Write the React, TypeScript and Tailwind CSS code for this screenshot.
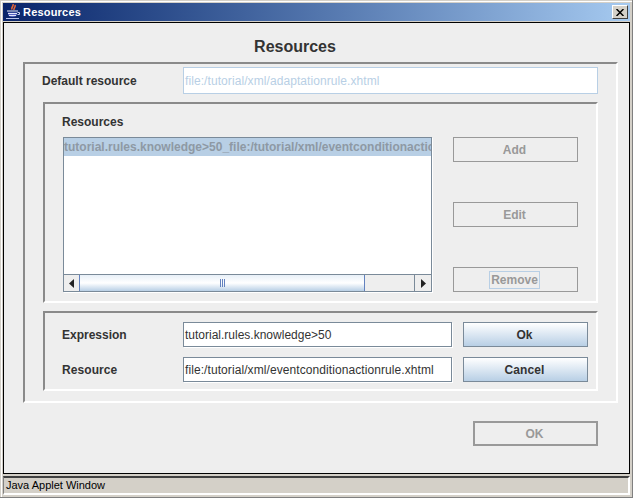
import React from "react";

const font = "font-['Liberation_Sans',Arial,sans-serif]";

const JavaIcon = () => (
  <svg width="16" height="16" viewBox="0 0 16 16" className="shrink-0">
    <path d="M8 0C9 2 6 3 7 5.500M10 1C11 3 8.500 4 9 6" stroke="#e8683a" strokeWidth="1.500" fill="none" />
    <path d="M2 7h11" stroke="#e6eafa" strokeWidth="1" />
    <path d="M3 8.500h9v1.500c0 2-2 3-4.500 3S3 12 3 10z" fill="#5a66c4" />
    <path d="M3 9.500h9M4 11.500h7" stroke="#dfe4f8" strokeWidth="1" />
    <path d="M12.500 8.500h2v2h-2" stroke="#c9d2ee" strokeWidth="1" fill="none" />
    <path d="M1 14.500h13" stroke="#b9c3ea" strokeWidth="1" />
  </svg>
);

const DisabledButton = ({ label, focused }: { label: string; focused?: boolean }) => (
  <div className="w-[125px] h-[25px] border border-[#999999] flex items-center justify-center pr-[2px]">
    <span className={`text-[12px] font-bold text-[#999999] leading-[16px] px-[1px] ${focused ? "outline outline-1 outline-[#b8cfe5]" : ""}`}>
      {label}
    </span>
  </div>
);

const ActiveButton = ({ label }: { label: string }) => (
  <div className="w-[125px] h-[25px] border border-[#7a8a99] flex items-center justify-center pr-[2px] bg-gradient-to-b from-[#ffffff] to-[#b8cfe5] text-[12px] font-bold text-[#333333]">
    {label}
  </div>
);

// etched titled panel: dark top and left, white bottom and right
const Etched = ({ className, children }: { className: string; children: React.ReactNode }) => (
  <div className={`border-t-2 border-l-2 border-t-[#8a8a8a] border-l-[#8a8a8a] border-b-2 border-r-2 border-b-white border-r-white ${className}`}>
    {children}
  </div>
);

const FormRow = ({ label, value, button, className }: { label: string; value: string; button: string; className?: string }) => (
  <div className={`flex items-center h-[25px] ${className ?? ""}`}>
    <div className="w-[121px] text-[12px] font-bold text-[#333333]">{label}</div>
    <div className="w-[269px] h-[25px] bg-white border border-[#7a8a99] shadow-[1px_1px_0_#ffffff] flex items-center pl-[1px] text-[12px] text-[#333333] whitespace-nowrap overflow-hidden">
      {value}
    </div>
    <div className="ml-[11px]">
      <ActiveButton label={button} />
    </div>
  </div>
);

const ScrollArrow = ({ dir }: { dir: "left" | "right" }) => (
  <div className={`h-[16px] bg-[#eeeeee] flex items-center justify-center ${dir === "left" ? "w-[15px]" : "w-[16px]"}`}>
    <svg width="6" height="9" viewBox="0 0 6 9">
      <path d={dir === "left" ? "M5 0v9L0 4.500z" : "M1 0v9l5-4.500z"} fill="#222222" />
    </svg>
  </div>
);

export default function App() {
  return (
    <div className={`w-[633px] h-[498px] bg-[#d4d0c8] border-r border-b border-[#808080] shadow-[inset_1px_1px_0_#d4d0c8,inset_2px_2px_0_#ffffff] flex flex-col overflow-hidden relative ${font}`}>
      <div className="mt-[3px] ml-[3px] mr-[2px] h-[18px] flex items-center bg-gradient-to-r from-[#0a246a] to-[#a6caf0] pl-[2px] pr-[2px]">
        <JavaIcon />
        <span className="ml-[2px] text-[11px] font-bold text-white tracking-[0.2px]">Resources</span>
        <div className="ml-auto w-[16px] h-[14px] bg-[#d4d0c8] border border-t-white border-l-white border-b-[#404040] border-r-[#404040] flex items-center justify-center">
          <svg width="8" height="7" viewBox="0 0 8 7">
            <path d="M0.500 0l7 7M7.500 0l-7 7" stroke="#000000" strokeWidth="1.500" />
          </svg>
        </div>
      </div>
      <div className="h-[1px] ml-[3px] mr-[2px] bg-[#d4d0c8]" />

      <div className="ml-[3px] mr-[2px] h-[452px] border border-black bg-[#eeeeee] flex flex-col">
        <div className="h-[39px] flex items-center justify-center pt-[8px] pr-[43px] text-[16px] font-bold text-[#333333]">
          Resources
        </div>

        <Etched className="ml-[19px] w-[595px] h-[341px] flex flex-col">
          <div className="flex items-center h-[27px] mt-[3px] ml-[17px]">
            <div className="w-[141px] text-[12px] font-bold text-[#333333]">Default resource</div>
            <div className="w-[415px] h-[27px] bg-white border border-[#b8cfe5] flex items-center pl-[1px] text-[12px] text-[#b8cfe5] tracking-[0.08px]">
              file:/tutorial/xml/adaptationrule.xhtml
            </div>
          </div>

          <Etched className="ml-[18px] mt-[8px] w-[555px] h-[201px] flex flex-col">
            <div className="h-[33px] pl-[17px] pt-[2px] flex items-center text-[12px] font-bold text-[#333333]">Resources</div>
            <div className="flex ml-[18px]">
              <div className="w-[369px] h-[155px] border border-[#7a8a99] shadow-[1px_1px_0_#ffffff] bg-white flex flex-col">
                <div className="flex-1 min-h-0">
                  <div className="h-[18px] bg-[#b8cfe5] flex items-center text-[12px] font-bold text-[#8e99a4] whitespace-nowrap overflow-hidden">
                    tutorial.rules.knowledge&gt;50_file:/tutorial/xml/eventconditionactionrule.xhtml
                  </div>
                </div>
                <div className="h-[17px] border-t border-[#7a8a99] flex bg-[#eeeeee]">
                  <ScrollArrow dir="left" />
                  <div className="w-[286px] h-[16px] border-x border-[#6382bf] bg-gradient-to-b from-[#e8f0f8] via-[#ffffff] to-[#b8cfe5] flex items-center justify-center gap-[1px]">
                    <span className="w-[1px] h-[8px] bg-[#6382bf]" />
                    <span className="w-[1px] h-[8px] bg-[#6382bf]" />
                    <span className="w-[1px] h-[8px] bg-[#6382bf]" />
                  </div>
                  <div className="w-[50px] border-r border-[#7a8a99]" />
                  <ScrollArrow dir="right" />
                </div>
              </div>
              <div className="ml-[21px] flex flex-col gap-[40px]">
                <DisabledButton label="Add" />
                <DisabledButton label="Edit" />
                <DisabledButton label="Remove" focused />
              </div>
            </div>
          </Etched>

          <Etched className="ml-[18px] mt-[8px] w-[555px] h-[80px] flex flex-col pl-[17px] pt-[8px]">
            <FormRow label="Expression" value="tutorial.rules.knowledge>50" button="Ok" className="mt-[1px]" />
            <FormRow label="Resource" value="file:/tutorial/xml/eventconditionactionrule.xhtml" button="Cancel" className="mt-[10px] tracking-[0.08px]" />
          </Etched>
        </Etched>

        <div className="ml-[469px] mt-[18px] w-[125px] h-[25px] border-2 border-[#999999] flex items-center justify-center pr-[2px] text-[12px] font-bold text-[#999999]">
          OK
        </div>
      </div>

      <div className="ml-[3px] mr-[2px] mt-[2px] h-[19px] border-t-2 border-t-[#404040] border-l border-l-[#808080] border-r-2 border-r-white border-b-2 border-b-white flex items-center pl-[2px] text-[11px] text-black">
        Java Applet Window
      </div>
    </div>
  );
}
